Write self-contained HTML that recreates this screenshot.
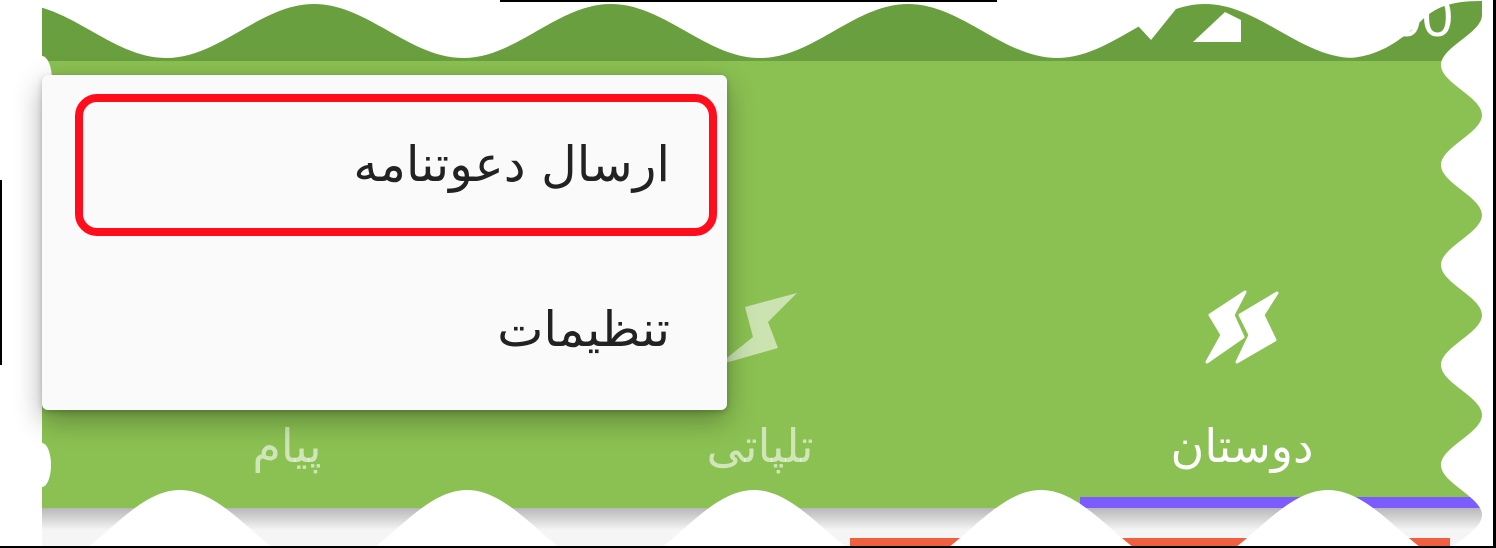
<!DOCTYPE html>
<html><head><meta charset="utf-8"><style>
html,body{margin:0;padding:0;background:#fff;overflow:hidden;width:1496px;height:548px;}
body{position:relative;font-family:"DejaVu Sans","Liberation Sans",sans-serif;}
.abs{position:absolute;}
.menu{position:absolute;left:42px;top:75px;width:685px;height:335px;background:#fafafa;border-radius:6px;box-shadow:0 10px 28px rgba(0,0,0,.32),0 2px 6px rgba(0,0,0,.2);}
.red{position:absolute;left:75px;top:94px;width:626px;height:126px;border:8px solid #ff0d1d;border-radius:22px;}
.mt{position:absolute;right:826px;color:#222;font-size:49px;line-height:58px;white-space:nowrap;direction:rtl;}
.tab{position:absolute;top:419px;font-size:46px;line-height:54px;white-space:nowrap;direction:rtl;transform:translateX(-50%);}
</style></head><body>
<svg class="abs" style="left:0;top:0" width="1496" height="548" viewBox="0 0 1496 548">
  <defs>
    <linearGradient id="sh" x1="0" y1="0" x2="0" y2="1">
      <stop offset="0" stop-color="#b8b8b8"/><stop offset="1" stop-color="#f5f5f5"/>
    </linearGradient>
  </defs>
  <rect x="42" y="0" width="1440" height="61" fill="#6a9f3f"/>
  <rect x="42" y="61" width="1440" height="447" fill="#8bc152"/>
  <rect x="1080" y="497" width="400" height="11" fill="#7c5cff"/>
  <rect x="42" y="508" width="1440" height="40" fill="#f5f5f5"/>
  <rect x="42" y="508" width="1440" height="22" fill="url(#sh)"/>
  <rect x="850" y="538" width="600" height="10" fill="#f06040"/>
  <path fill="#fff" d="M-131 58 C -77.5 58 -36.5 4 17 4 C 70.5 4 112.5 58 166 58 C 219.5 58 260.5 4 314 4 C 367.5 4 409.5 58 463 58 C 516.5 58 557.5 4 611 4 C 664.5 4 706.5 58 760 58 C 813.5 58 854.5 4 908 4 C 961.5 4 1003.5 58 1057 58 C 1110.5 58 1151.5 4 1205 4 C 1258.5 4 1300.5 58 1354 58 C 1407.5 58 1448.5 4 1502 4 L1502 0 L-131 0 Z"/>
  <path fill="#6a9f3f" d="M1345 58 C1375 58 1400 42 1420 22 C1435 7 1450 1 1482 1 L1482 61 L1345 61 Z"/>
  <polygon fill="#fff" points="1128,15 1151,40 1180,4 1150,2"/>
  <polygon fill="#fff" points="1193,42 1241,42 1241,20 1225,12"/>
  <text x="1453" y="36" text-anchor="end" fill="#fff" font-family="Liberation Sans, sans-serif" font-size="56">0.00</text>
  <path fill="#fff" d="M-107 490 C -55 490 -15.5 570 36.5 570 C 88.5 570 128 490 180 490 C 232 490 271.5 570 323.5 570 C 375.5 570 415 490 467 490 C 519 490 558.5 570 610.5 570 C 662.5 570 702 490 754 490 C 806 490 845.5 570 897.5 570 C 949.5 570 989 490 1041 490 C 1093 490 1132.5 570 1184.5 570 C 1236.5 570 1276 490 1328 490 C 1380 490 1419.5 570 1471.5 570 C 1523.5 570 1563 490 1615 490 L1615 600 L-107 600 Z"/>
  <path fill="#fff" d="M1482 15 C1482 33 1441 47 1441 65 C1441 83 1482 97 1482 115 C1482 133 1441 147 1441 165 C1441 183 1482 197 1482 215 C1482 233 1441 247 1441 265 C1441 283 1482 297 1482 315 C1482 333 1441 347 1441 365 C1441 383 1482 397 1482 415 C1482 433 1441 447 1441 465 C1441 483 1482 497 1482 515 C1482 533 1441 547 1441 565 L1500 565 L1500 15 Z"/>
  <rect x="1482" y="0" width="20" height="20" fill="#fff"/>
  <ellipse cx="42" cy="80" rx="10" ry="24" fill="#fff"/>
  <ellipse cx="42" cy="270" rx="10" ry="24" fill="#fff"/>
  <ellipse cx="42" cy="465" rx="9" ry="22" fill="#fff"/>
  <g fill="#fff" stroke="#fff" stroke-width="3" stroke-linejoin="round">
    <polygon points="1245,292 1210,315 1222,335 1207,362 1243,337 1233,315"/>
    <polygon points="1277,293 1240,315 1250,335 1237,362 1275,340 1263,315"/>
  </g>
  <polygon fill="rgba(255,255,255,0.55)" points="797,293 745,307 753,337 718,365 778,348 768,322"/>
  <rect x="500" y="0" width="497" height="2" fill="#000"/>
  <rect x="0" y="180" width="2" height="185" fill="#000"/>
  <rect x="1493" y="0" width="3" height="548" fill="#000"/>
  <rect x="0" y="546" width="1496" height="2" fill="#000"/>
</svg>
<div class="tab" style="left:1242px;color:#fff;">دوستان</div>
<div class="tab" style="left:760px;color:rgba(255,255,255,0.6);">تلپاتی</div>
<div class="tab" style="left:287px;color:rgba(255,255,255,0.6);">پیام</div>
<div class="menu"></div>
<div class="red"></div>
<div class="mt" style="top:136px;">ارسال دعوتنامه</div>
<div class="mt" style="top:301px;">تنظیمات</div>
</body></html>
